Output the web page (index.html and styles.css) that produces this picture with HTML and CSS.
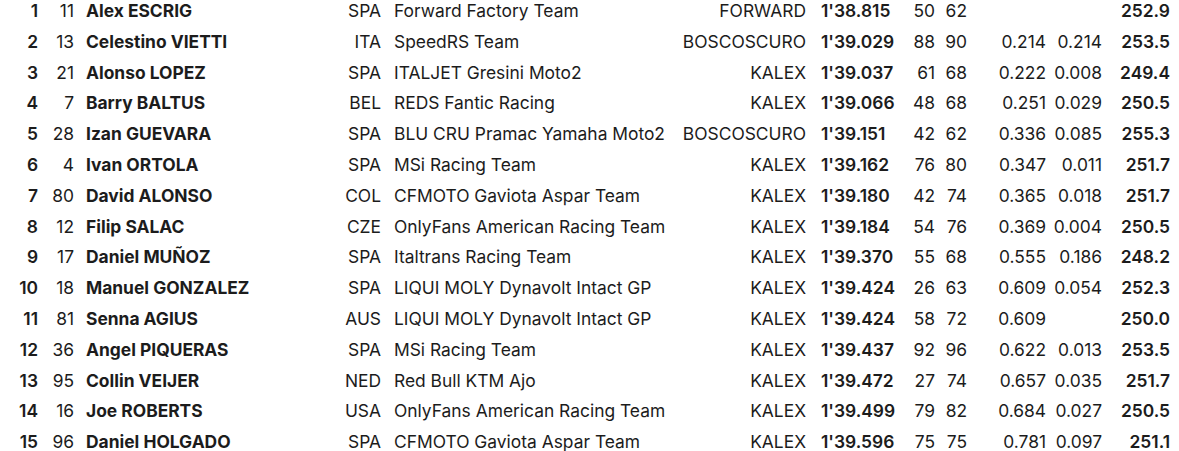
FILE: index.html
```html
<!DOCTYPE html>
<html>
<head>
<meta charset="utf-8">
<link rel="stylesheet" href="styles.css">
</head>
<body>
<div class="results">
  <div class="row"><span class="pos">1</span><span class="num">11</span><span class="name">Alex ESCRIG</span><span class="nat">SPA</span><span class="team">Forward Factory Team</span><span class="cons">FORWARD</span><span class="time">1'38.815</span><span class="lap">50</span><span class="lap">62</span><span class="gap"></span><span class="gap2"></span><span class="speed">252.9</span></div>
  <div class="row"><span class="pos">2</span><span class="num">13</span><span class="name">Celestino VIETTI</span><span class="nat">ITA</span><span class="team">SpeedRS Team</span><span class="cons">BOSCOSCURO</span><span class="time">1'39.029</span><span class="lap">88</span><span class="lap">90</span><span class="gap">0.214</span><span class="gap2">0.214</span><span class="speed">253.5</span></div>
  <div class="row"><span class="pos">3</span><span class="num">21</span><span class="name">Alonso LOPEZ</span><span class="nat">SPA</span><span class="team">ITALJET Gresini Moto2</span><span class="cons">KALEX</span><span class="time">1'39.037</span><span class="lap">61</span><span class="lap">68</span><span class="gap">0.222</span><span class="gap2">0.008</span><span class="speed">249.4</span></div>
  <div class="row"><span class="pos">4</span><span class="num">7</span><span class="name">Barry BALTUS</span><span class="nat">BEL</span><span class="team">REDS Fantic Racing</span><span class="cons">KALEX</span><span class="time">1'39.066</span><span class="lap">48</span><span class="lap">68</span><span class="gap">0.251</span><span class="gap2">0.029</span><span class="speed">250.5</span></div>
  <div class="row"><span class="pos">5</span><span class="num">28</span><span class="name">Izan GUEVARA</span><span class="nat">SPA</span><span class="team">BLU CRU Pramac Yamaha Moto2</span><span class="cons">BOSCOSCURO</span><span class="time">1'39.151</span><span class="lap">42</span><span class="lap">62</span><span class="gap">0.336</span><span class="gap2">0.085</span><span class="speed">255.3</span></div>
  <div class="row"><span class="pos">6</span><span class="num">4</span><span class="name">Ivan ORTOLA</span><span class="nat">SPA</span><span class="team">MSi Racing Team</span><span class="cons">KALEX</span><span class="time">1'39.162</span><span class="lap">76</span><span class="lap">80</span><span class="gap">0.347</span><span class="gap2">0.011</span><span class="speed">251.7</span></div>
  <div class="row"><span class="pos">7</span><span class="num">80</span><span class="name">David ALONSO</span><span class="nat">COL</span><span class="team">CFMOTO Gaviota Aspar Team</span><span class="cons">KALEX</span><span class="time">1'39.180</span><span class="lap">42</span><span class="lap">74</span><span class="gap">0.365</span><span class="gap2">0.018</span><span class="speed">251.7</span></div>
  <div class="row"><span class="pos">8</span><span class="num">12</span><span class="name">Filip SALAC</span><span class="nat">CZE</span><span class="team">OnlyFans American Racing Team</span><span class="cons">KALEX</span><span class="time">1'39.184</span><span class="lap">54</span><span class="lap">76</span><span class="gap">0.369</span><span class="gap2">0.004</span><span class="speed">250.5</span></div>
  <div class="row"><span class="pos">9</span><span class="num">17</span><span class="name">Daniel MUÑOZ</span><span class="nat">SPA</span><span class="team">Italtrans Racing Team</span><span class="cons">KALEX</span><span class="time">1'39.370</span><span class="lap">55</span><span class="lap">68</span><span class="gap">0.555</span><span class="gap2">0.186</span><span class="speed">248.2</span></div>
  <div class="row"><span class="pos">10</span><span class="num">18</span><span class="name">Manuel GONZALEZ</span><span class="nat">SPA</span><span class="team">LIQUI MOLY Dynavolt Intact GP</span><span class="cons">KALEX</span><span class="time">1'39.424</span><span class="lap">26</span><span class="lap">63</span><span class="gap">0.609</span><span class="gap2">0.054</span><span class="speed">252.3</span></div>
  <div class="row"><span class="pos">11</span><span class="num">81</span><span class="name">Senna AGIUS</span><span class="nat">AUS</span><span class="team">LIQUI MOLY Dynavolt Intact GP</span><span class="cons">KALEX</span><span class="time">1'39.424</span><span class="lap">58</span><span class="lap">72</span><span class="gap">0.609</span><span class="gap2"></span><span class="speed">250.0</span></div>
  <div class="row"><span class="pos">12</span><span class="num">36</span><span class="name">Angel PIQUERAS</span><span class="nat">SPA</span><span class="team">MSi Racing Team</span><span class="cons">KALEX</span><span class="time">1'39.437</span><span class="lap">92</span><span class="lap">96</span><span class="gap">0.622</span><span class="gap2">0.013</span><span class="speed">253.5</span></div>
  <div class="row"><span class="pos">13</span><span class="num">95</span><span class="name">Collin VEIJER</span><span class="nat">NED</span><span class="team">Red Bull KTM Ajo</span><span class="cons">KALEX</span><span class="time">1'39.472</span><span class="lap">27</span><span class="lap">74</span><span class="gap">0.657</span><span class="gap2">0.035</span><span class="speed">251.7</span></div>
  <div class="row"><span class="pos">14</span><span class="num">16</span><span class="name">Joe ROBERTS</span><span class="nat">USA</span><span class="team">OnlyFans American Racing Team</span><span class="cons">KALEX</span><span class="time">1'39.499</span><span class="lap">79</span><span class="lap">82</span><span class="gap">0.684</span><span class="gap2">0.027</span><span class="speed">250.5</span></div>
  <div class="row"><span class="pos">15</span><span class="num">96</span><span class="name">Daniel HOLGADO</span><span class="nat">SPA</span><span class="team">CFMOTO Gaviota Aspar Team</span><span class="cons">KALEX</span><span class="time">1'39.596</span><span class="lap">75</span><span class="lap">75</span><span class="gap">0.781</span><span class="gap2">0.097</span><span class="speed">251.1</span></div>
</div>
</body>
</html>
```
FILE: styles.css
```css
html, body {
  margin: 0;
  padding: 0;
  background: #ffffff;
}
body {
  font-family: Inter, "Noto Sans", sans-serif;
  font-size: 17.4px;
  color: #1c1c1c;
  overflow: hidden;
}
.results {
  margin-top: -4px;
}
.row {
  display: grid;
  grid-template-columns: 38px 36px 256px 51px 299px 126px 95px 34px 32px 79px 56px 68px;
  height: 30.8px;
  align-items: center;
  white-space: nowrap;
}
.row span {
  display: block;
  line-height: 30.8px;
}
.pos, .num, .nat, .cons, .lap, .gap, .gap2, .speed {
  text-align: right;
}
.pos, .time, .speed {
  font-weight: 600;
}
.name {
  padding-left: 12px;
  font-weight: 650;
}
.team {
  padding-left: 13px;
}
.time {
  padding-left: 15px;
}
```
